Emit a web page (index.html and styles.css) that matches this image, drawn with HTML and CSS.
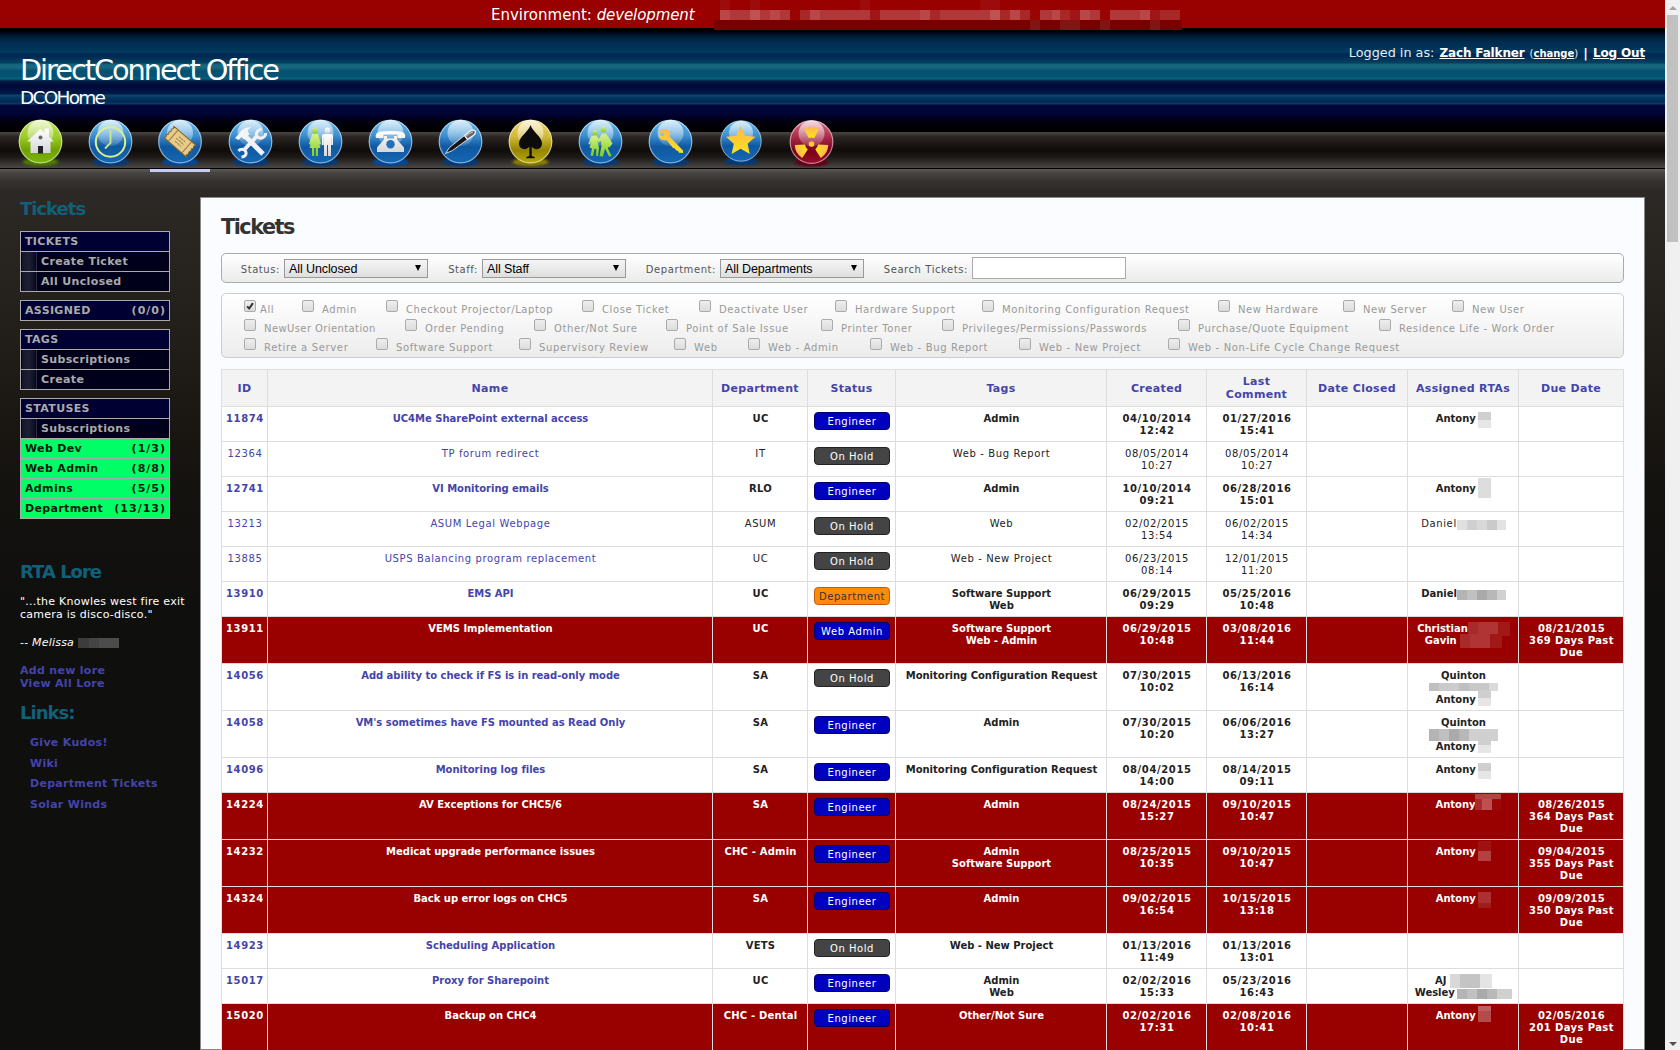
FILE: index.html
```html
<!DOCTYPE html>
<html lang="en">
<head>
<meta charset="utf-8">
<title>DirectConnect Office - Tickets</title>
<link rel="stylesheet" href="styles.css">
</head>
<body>
<div class="page">
  <div class="env">
    <span>Environment:</span> <em>development</em>
    <svg class="env-mask" width="468" height="31" viewBox="714 0 468 31" shape-rendering="crispEdges" fill="none">
      <path d="M714 25h468" stroke="#7a0000" stroke-width="10"/>
      <path d="M720 5h10M750 5h10M860 5h10M980 5h20" stroke="#9d0c0c" stroke-width="10"/>
      <path d="M720 15h460" stroke="#b13838" stroke-width="10"/>
      <path d="M720 15h10M770 15h10M810 15h10M920 15h10M1010 15h10M1052 15h8M1080 15h10M1140 15h10" stroke="#b94747" stroke-width="10"/>
      <path d="M750 15h10M990 15h10" stroke="#c05252" stroke-width="10"/>
      <path d="M800 15h10M930 15h10M1000 15h10M1020 15h10M1060 15h10M1160 15h20" stroke="#a82828" stroke-width="10"/>
      <path d="M870 15h10M1070 15h10M1150 15h10" stroke="#a01616" stroke-width="10"/>
      <path d="M790 15h10M1030 15h10M1100 15h10" stroke="#990404" stroke-width="10"/>
      <path d="M1030 25h10M1060 25h20M1100 25h10M1150 25h10" stroke="#821414" stroke-width="10"/>
    </svg>
  </div>
  <header class="header">
    <div class="brand">
      <h1>DirectConnect Office</h1>
      <p>DCOHome</p>
    </div>
    <div class="login"><span>Logged in as:</span> <a class="user">Zach Falkner</a> <small>(<a>change</a>)</small> <b>|</b> <a class="out">Log Out</a></div>
  </header>

  <svg class="defs" width="0" height="0">
    <defs>
      <linearGradient id="blue" x1="0" y1="0" x2="0" y2="1"><stop offset="0" stop-color="#6bbcec"/><stop offset=".35" stop-color="#3f92d2"/><stop offset=".62" stop-color="#0f58a0"/><stop offset="1" stop-color="#1568b4"/></linearGradient>
      <linearGradient id="green" x1="0" y1="0" x2="0" y2="1"><stop offset="0" stop-color="#c2e45a"/><stop offset=".4" stop-color="#9ccc28"/><stop offset=".7" stop-color="#6ea000"/><stop offset="1" stop-color="#7cb80a"/></linearGradient>
      <linearGradient id="gold" x1="0" y1="0" x2="0" y2="1"><stop offset="0" stop-color="#f0d870"/><stop offset=".4" stop-color="#d0b838"/><stop offset=".7" stop-color="#948400"/><stop offset="1" stop-color="#b8ac10"/></linearGradient>
      <linearGradient id="red" x1="0" y1="0" x2="0" y2="1"><stop offset="0" stop-color="#d87088"/><stop offset=".4" stop-color="#a82848"/><stop offset=".7" stop-color="#780018"/><stop offset="1" stop-color="#98102c"/></linearGradient>
      <linearGradient id="shine" x1="0" y1="0" x2="0" y2="1"><stop offset="0" stop-color="#fff" stop-opacity=".75"/><stop offset="1" stop-color="#fff" stop-opacity=".12"/></linearGradient>
      <linearGradient id="silver" x1="0" y1="0" x2="0" y2="1"><stop offset="0" stop-color="#fff"/><stop offset="1" stop-color="#d4d6da"/></linearGradient>
      <linearGradient id="lime" x1="0" y1="0" x2="0" y2="1"><stop offset="0" stop-color="#d8f090"/><stop offset="1" stop-color="#7cd010"/></linearGradient>
      <linearGradient id="amber" x1="0" y1="0" x2="0" y2="1"><stop offset="0" stop-color="#ffb84c"/><stop offset="1" stop-color="#ffe21c"/></linearGradient>
      <filter id="soft" x="-30%" y="-100%" width="160%" height="300%"><feGaussianBlur stdDeviation="1.8 1.2"/></filter>
      <g id="gloss"><circle cx="30.500" cy="23.500" r="21.300" fill="none" stroke="#fff" stroke-opacity=".5" stroke-width="1.200"/><circle cx="30.500" cy="15" r="13" fill="url(#shine)"/></g>
    </defs>
  </svg>

  <nav class="nav">
    <ul>
      <li><svg viewBox="0 0 60 51"><ellipse cx="30.500" cy="44" rx="18" ry="4" fill="#4c7a00" filter="url(#soft)"/><circle cx="30.500" cy="23.500" r="21.800" fill="url(#green)"/><use href="#gloss"/><path d="M17 23.500 30.500 11l4 3.700V10.500H39v8.200l5 4.800h-3.500V35h-20V23.500z" fill="url(#silver)"/><circle cx="30.500" cy="19.500" r="2" fill="#666"/><path d="M28 28h5v7.500h-5z" fill="#222"/></svg></li>
      <li><svg viewBox="0 0 60 51"><ellipse cx="30.500" cy="44" rx="18" ry="4" fill="#063a7c" filter="url(#soft)"/><circle cx="30.500" cy="23.500" r="21.800" fill="url(#blue)"/><use href="#gloss"/><circle cx="30.500" cy="24" r="14.700" fill="none" stroke="#dcf08a" stroke-width="2"/><path d="M30.500 12.500V25L25 30.500" fill="none" stroke="#cfe888" stroke-width="1.800"/></svg></li>
      <li class="on"><svg viewBox="0 0 60 51"><ellipse cx="30.500" cy="44" rx="18" ry="4" fill="#064a9c" filter="url(#soft)"/><circle cx="30" cy="23.500" r="21.800" fill="url(#blue)"/><use href="#gloss" x="-.5"/><g transform="rotate(41 30 23.500)"><path d="M15.500 16h29l-1 2 1 1.900-1 1.800 1 1.900-1 1.800 1 1.900-1 1.800 1 1.900h-29l1-1.900-1-1.800 1-1.900-1-1.800 1-1.900-1-1.800 1-1.900z" fill="#e6cc8c" stroke="#8a6420" stroke-width="1"/><path d="M21 16.500v14M39 16.500v14" stroke="#a07830" stroke-width="1"/><path d="M26 20.500h8M25 23.500h10M26 26.500h8" stroke="#a8884c" stroke-width="1.200" stroke-dasharray="2.500 .7"/></g></svg></li>
      <li><svg viewBox="0 0 60 51"><ellipse cx="30.500" cy="44" rx="18" ry="4" fill="#063a7c" filter="url(#soft)"/><circle cx="30.500" cy="23.500" r="21.800" fill="url(#blue)"/><use href="#gloss"/><g stroke="#f0f2f6" fill="none"><path d="M25 18 43 36" stroke-width="5"/><path d="M37 18 24 32" stroke-width="4"/><path d="M41.500 11.500c-3 0-5.500 2.300-5 5.500.400 2.500 4 4 6.500 2.500 1.800-1 2.800-2.500 2.500-4.500M18.500 33c2-2.500 6-2.200 7.200.5 1.300 3.200-1.200 5.500-4.200 5.500" stroke-width="3"/></g><path d="m15 20 4-4c1-4 7-7.500 12.500-6.500-3 1-4 2.500-3.500 4.500l1.500 2-5.500 5.500-2.500-2.500-3 3z" fill="#f4f5f8"/></svg></li>
      <li><svg viewBox="0 0 60 51"><ellipse cx="30.500" cy="44" rx="18" ry="4" fill="#063a7c" filter="url(#soft)"/><circle cx="30.500" cy="23.500" r="21.800" fill="url(#blue)"/><use href="#gloss"/><g fill="url(#lime)"><circle cx="25" cy="12.500" r="2.900"/><path d="M22 16h6l3 10-1.500.7L28 22l2.500 8H28v8h-2.200v-8h-1.600v8H22v-8h-2.500L22 22l-1.500 4.700L19 26z"/></g><g fill="url(#silver)"><circle cx="37.500" cy="12.500" r="2.900"/><path d="M34 16h7q2 0 2 2v9h-1.800v-8H41v19h-3v-11h-1v11h-3V19h-.2v8H32v-9q0-2 2-2z"/></g></svg></li>
      <li><svg viewBox="0 0 60 51"><ellipse cx="30.500" cy="44" rx="18" ry="4" fill="#064a9c" filter="url(#soft)"/><circle cx="30.500" cy="23.500" r="21.800" fill="url(#blue)"/><use href="#gloss"/><path d="M16 20c-1-4 1-6 5-6.500 6-.8 13-.8 19 0 4 .5 6 2.500 5 6.500h-7.500v-3.500h-14V20zM24 18h3v2.500h7V18h3v3.500l7 8V34H17v-4.500l7-8z" fill="url(#silver)"/><circle cx="30.500" cy="26.300" r="4.200" fill="#2270b8"/></svg></li>
      <li><svg viewBox="0 0 60 51"><ellipse cx="30.500" cy="44" rx="18" ry="4" fill="#063a7c" filter="url(#soft)"/><circle cx="30.500" cy="23.500" r="21.800" fill="url(#blue)"/><use href="#gloss"/><path d="m15.500 35.500 4-6L34.500 17.500l3 4L22.500 32.500z" fill="#161616" stroke="#e8ecf2" stroke-width=".9"/><path d="m34.500 17.500 5.500-4.300q4-2.200 5.300-.2 1 2.400-2 4.500l-5.800 4z" fill="#666" stroke="#f4f6fa" stroke-width="1.200"/><path d="M36 18q4-3.300 7-4" stroke="#ccc" fill="none"/></svg></li>
      <li><svg viewBox="0 0 60 51"><ellipse cx="30.500" cy="44" rx="18" ry="4" fill="#8a7e00" filter="url(#soft)"/><circle cx="30.500" cy="23.500" r="21.800" fill="url(#gold)"/><use href="#gloss"/><path d="M30.500 7C33 14.500 42 18.500 42 25.500c0 6-7 7.500-10.300 3.200V38l3 1v1.300h-8.400V39l3-1v-9.300C26 33 19 31.500 19 25.500 19 18.500 28 14.500 30.500 7z" fill="#0c0c0a"/></svg></li>
      <li><svg viewBox="0 0 60 51"><ellipse cx="30.500" cy="44" rx="18" ry="4" fill="#063a7c" filter="url(#soft)"/><circle cx="30.500" cy="23.500" r="21.800" fill="url(#blue)"/><use href="#gloss"/><g fill="url(#lime)"><circle cx="25" cy="14.500" r="2.600"/><path d="m21.500 18 5-.5 2.500 3.500 3 1-.5 1.500-4-1 1.500 7.500-1 8h-2l.3-7-1.800-.3L23 38l-2.500-.5 1.500-7-2.500-1 2-6-1.500 3-1.700-.5z"/><circle cx="33.500" cy="11.500" r="2.900"/><path d="m32 15.500 4 .2 3 4 3.500 5.800-3 4-1-1-.5 2 3.500 7.500-2.500.5-4-8-2 8-3.500-.2 2-10-.5-6-2.500 2.500-1-1.500z"/></g></svg></li>
      <li><svg viewBox="0 0 60 51"><ellipse cx="30.500" cy="44" rx="18" ry="4" fill="#063a7c" filter="url(#soft)"/><circle cx="30.500" cy="23.500" r="21.800" fill="url(#blue)"/><use href="#gloss"/><path fill-rule="evenodd" d="M20 13q4-3.500 8-1 2.800 2.500 1.500 6.500L43 32.500V35l-4-.3-1-2-2-.2-1-2-2-.5-6.500-8q-4 1-6.500-1.500-2.500-4 0-7.500zm2.200 1.200a1.900 1.900 0 1 0 .1 0z" fill="url(#amber)"/></svg></li>
      <li><svg viewBox="0 0 60 51"><ellipse cx="31" cy="43.500" rx="17" ry="3.500" fill="#063a7c" filter="url(#soft)"/><circle cx="31" cy="23" r="20.500" fill="url(#blue)"/><circle cx="31" cy="23" r="20.200" fill="none" stroke="#fff" stroke-opacity=".5" stroke-width="1"/><circle cx="31" cy="15" r="12" fill="url(#shine)"/><path d="m30.700 8 4.300 9.700 10.400 1.100-7.800 7 2.200 10.300-9.100-5.300-9.100 5.300 2.200-10.300-7.800-7 10.400-1.100z" fill="url(#amber)"/></svg></li>
      <li><svg viewBox="0 0 60 51"><ellipse cx="31.500" cy="44.500" rx="17" ry="4" fill="#600012" filter="url(#soft)"/><circle cx="31.500" cy="24" r="21.800" fill="url(#red)"/><use href="#gloss" x="1" y=".5"/><g fill="url(#amber)"><circle cx="31.500" cy="26" r="2.800"/><path d="m28.700 20-4.700-9q7.500-4 15 0l-4.700 9q-2.800-1-5.600 0z"/><path d="m28.700 20-4.700-9q7.500-4 15 0l-4.700 9q-2.800-1-5.600 0z" transform="rotate(120 31.500 26)"/><path d="m28.700 20-4.700-9q7.500-4 15 0l-4.700 9q-2.800-1-5.600 0z" transform="rotate(240 31.500 26)"/></g></svg></li>
    </ul>
  </nav>

  <div class="body">
    <aside class="side">
      <h2>Tickets</h2>
      <ul class="menu"><li>TICKETS</li><li class="sub">Create Ticket</li><li class="sub">All Unclosed</li></ul>
      <ul class="menu"><li>ASSIGNED <b>(0/0)</b></li></ul>
      <ul class="menu"><li>TAGS</li><li class="sub">Subscriptions</li><li class="sub">Create</li></ul>
      <ul class="menu"><li>STATUSES</li><li class="sub">Subscriptions</li><li class="go">Web Dev <b>(1/3)</b></li><li class="go">Web Admin <b>(8/8)</b></li><li class="go">Admins <b>(5/5)</b></li><li class="go">Department <b>(13/13)</b></li></ul>
      <h2 class="lore">RTA Lore</h2>
      <p>"...the Knowles west fire exit camera is disco-disco."</p>
      <p class="by">-- <em>Melissa</em> <span class="px-side"></span></p>
      <p class="more"><a>Add new lore</a><a>View All Lore</a></p>
      <h2 class="links-title">Links:</h2>
      <ul class="links"><li>Give Kudos!</li><li>Wiki</li><li>Department Tickets</li><li>Solar Winds</li></ul>
    </aside>

    <main class="main">
      <h2>Tickets</h2>
      <form class="filters">
        <label>Status:</label><span class="select">All Unclosed</span>
        <label>Staff:</label><span class="select">All Staff</span>
        <label>Department:</label><span class="select">All Departments</span>
        <label>Search Tickets:</label><span class="search"></span>
      </form>
      <div class="tags">
        <div class="tag-row one"><label class="all"><i><svg viewBox="0 0 12 12"><path d="M2.500 6.500 5 9l4.500-6.500" fill="none" stroke="#333" stroke-width="2.400"/></svg></i>All</label><label><i></i>Admin</label><label><i></i>Checkout Projector/Laptop</label><label><i></i>Close Ticket</label><label><i></i>Deactivate User</label><label><i></i>Hardware Support</label><label><i></i>Monitoring Configuration Request</label><label><i></i>New Hardware</label><label><i></i>New Server</label><label><i></i>New User</label></div>
        <div class="tag-row two"><label><i></i>NewUser Orientation</label><label><i></i>Order Pending</label><label><i></i>Other/Not Sure</label><label><i></i>Point of Sale Issue</label><label><i></i>Printer Toner</label><label><i></i>Privileges/Permissions/Passwords</label><label><i></i>Purchase/Quote Equipment</label><label><i></i>Residence Life - Work Order</label></div>
        <div class="tag-row three"><label><i></i>Retire a Server</label><label><i></i>Software Support</label><label><i></i>Supervisory Review</label><label><i></i>Web</label><label><i></i>Web - Admin</label><label><i></i>Web - Bug Report</label><label><i></i>Web - New Project</label><label><i></i>Web - Non-Life Cycle Change Request</label></div>
      </div>
      <table class="tickets">
        <colgroup><col class="c-id"><col class="c-name"><col class="c-dept"><col class="c-status"><col class="c-tags"><col class="c-date"><col class="c-date"><col class="c-closed"><col class="c-rta"><col class="c-due"></colgroup>
        <thead><tr><th>ID</th><th>Name</th><th>Department</th><th>Status</th><th>Tags</th><th>Created</th><th>Last<br>Comment</th><th>Date Closed</th><th>Assigned RTAs</th><th>Due Date</th></tr></thead>
        <tbody>
          <tr class="new"><td>11874</td><td>UC4Me SharePoint external access</td><td>UC</td><td><span class="badge">Engineer</span></td><td>Admin</td><td>04/10/2014<br>12:42</td><td>01/27/2016<br>15:41</td><td></td><td>Antony <span class="px"></span></td><td></td></tr>
          <tr><td>12364</td><td>TP forum redirect</td><td>IT</td><td><span class="badge hold">On Hold</span></td><td>Web - Bug Report</td><td>08/05/2014<br>10:27</td><td>08/05/2014<br>10:27</td><td></td><td></td><td></td></tr>
          <tr class="new"><td>12741</td><td>VI Monitoring emails</td><td>RLO</td><td><span class="badge">Engineer</span></td><td>Admin</td><td>10/10/2014<br>09:21</td><td>06/28/2016<br>15:01</td><td></td><td>Antony <span class="px px-tall"></span></td><td></td></tr>
          <tr><td>13213</td><td>ASUM Legal Webpage</td><td>ASUM</td><td><span class="badge hold">On Hold</span></td><td>Web</td><td>02/02/2015<br>13:54</td><td>06/02/2015<br>14:34</td><td></td><td>Daniel<span class="px px-l"></span></td><td></td></tr>
          <tr><td>13885</td><td>USPS Balancing program replacement</td><td>UC</td><td><span class="badge hold">On Hold</span></td><td>Web - New Project</td><td>06/23/2015<br>08:14</td><td>12/01/2015<br>11:20</td><td></td><td></td><td></td></tr>
          <tr class="new"><td>13910</td><td>EMS API</td><td>UC</td><td><span class="badge dept">Department</span></td><td>Software Support<br>Web</td><td>06/29/2015<br>09:29</td><td>05/25/2016<br>10:48</td><td></td><td>Daniel<span class="px px-l dark"></span></td><td></td></tr>
          <tr class="new late"><td>13911</td><td>VEMS Implementation</td><td>UC</td><td><span class="badge">Web Admin</span></td><td>Software Support<br>Web - Admin</td><td>06/29/2015<br>10:48</td><td>03/08/2016<br>11:44</td><td></td><td>Christian<span class="px px-m"></span><br>Gavin <span class="px px-m"></span></td><td>08/21/2015<br>369 Days Past<br>Due</td></tr>
          <tr class="new"><td>14056</td><td>Add ability to check if FS is in read-only mode</td><td>SA</td><td><span class="badge hold">On Hold</span></td><td>Monitoring Configuration Request</td><td>07/30/2015<br>10:02</td><td>06/13/2016<br>16:14</td><td></td><td>Quinton<br><span class="px px-xl"></span><br>Antony <span class="px px-up"></span></td><td></td></tr>
          <tr class="new"><td>14058</td><td>VM's sometimes have FS mounted as Read Only</td><td>SA</td><td><span class="badge">Engineer</span></td><td>Admin</td><td>07/30/2015<br>10:20</td><td>06/06/2016<br>13:27</td><td></td><td>Quinton<br><span class="px px-xl dark"></span><br>Antony <span class="px px-up"></span></td><td></td></tr>
          <tr class="new"><td>14096</td><td>Monitoring log files</td><td>SA</td><td><span class="badge">Engineer</span></td><td>Monitoring Configuration Request</td><td>08/04/2015<br>14:00</td><td>08/14/2015<br>09:11</td><td></td><td>Antony <span class="px"></span></td><td></td></tr>
          <tr class="new late"><td>14224</td><td>AV Exceptions for CHC5/6</td><td>SA</td><td><span class="badge">Engineer</span></td><td>Admin</td><td>08/24/2015<br>15:27</td><td>09/10/2015<br>10:47</td><td></td><td>Antony<span class="px px-wide"></span></td><td>08/26/2015<br>364 Days Past<br>Due</td></tr>
          <tr class="new late"><td>14232</td><td>Medicat upgrade performance issues</td><td>CHC - Admin</td><td><span class="badge">Engineer</span></td><td>Admin<br>Software Support</td><td>08/25/2015<br>10:35</td><td>09/10/2015<br>10:47</td><td></td><td>Antony <span class="px px-tall"></span></td><td>09/04/2015<br>355 Days Past<br>Due</td></tr>
          <tr class="new late"><td>14324</td><td>Back up error logs on CHC5</td><td>SA</td><td><span class="badge">Engineer</span></td><td>Admin</td><td>09/02/2015<br>16:54</td><td>10/15/2015<br>13:18</td><td></td><td>Antony <span class="px px-dim"></span></td><td>09/09/2015<br>350 Days Past<br>Due</td></tr>
          <tr class="new"><td>14923</td><td>Scheduling Application</td><td>VETS</td><td><span class="badge hold">On Hold</span></td><td>Web - New Project</td><td>01/13/2016<br>11:49</td><td>01/13/2016<br>13:01</td><td></td><td></td><td></td></tr>
          <tr class="new"><td>15017</td><td>Proxy for Sharepoint</td><td>UC</td><td><span class="badge">Engineer</span></td><td>Admin<br>Web</td><td>02/02/2016<br>15:33</td><td>05/23/2016<br>16:43</td><td></td><td>AJ <span class="px px-m"></span><br>Wesley <span class="px px-l px-w dark"></span></td><td></td></tr>
          <tr class="new late"><td>15020</td><td>Backup on CHC4</td><td>CHC - Dental</td><td><span class="badge">Engineer</span></td><td>Other/Not Sure</td><td>02/02/2016<br>17:31</td><td>02/08/2016<br>10:41</td><td></td><td>Antony <span class="px px-up px-bright"></span></td><td>02/05/2016<br>201 Days Past<br>Due</td></tr>
        </tbody>
      </table>
    </main>
  </div>
</div>
<div class="scroll"><i class="up"></i><b></b><i class="down"></i></div>
</body>
</html>
```
FILE: styles.css
```css
* { box-sizing: border-box; margin: 0; padding: 0; }
body {
  display: grid;
  grid-template-columns: 1fr 15px;
  height: 1050px;
  overflow: hidden;
  font: 11px/13px "DejaVu Sans", Verdana, sans-serif;
}
ul { list-style: none; }
.page { height: 1050px; overflow: hidden; background: #0f0f0e; }
.defs { display: block; }

.env {
  position: relative;
  z-index: 1;
  height: 28px;
  padding-left: 491px;
  background: #900;
  color: #fff;
  font-size: 15px;
  line-height: 30px;
}
.env em { letter-spacing: -.1px; }
.env-mask { position: absolute; left: 714px; top: 0; }

.header {
  display: flex;
  justify-content: space-between;
  height: 104px;
  padding: 17px 20px 0;
  color: #fff;
  background: linear-gradient(#000 0, #000 3px, #000a1c 5px, #001a33 8px, #012c50 14px, #013a60 25px, #002a55 25px, #002a55 29px, #013658 31px, #04405f 35px, #12617b 36px, #1a6a80 39px, #055070 43px, #045474 49px, #066482 50px, #04486a 52px, #001a40 53px, #000838 58px, #001040 62px, #001a48 66px, #0c4870 67px, #04345f 70px, #012a55 74px, #0a3f66 76px, #00063a 77px, #000535 84px, #00002c 89px, #000010 92px, #00000e 97px, #000 98px);
}
.brand h1 { font-size: 28.8px; line-height: 50px; font-weight: 400; letter-spacing: -2.05px; }
.brand p { margin-top: -8px; font-size: 18.5px; line-height: 22px; letter-spacing: -1.75px; }
.login { display: flex; align-items: baseline; gap: 5px; height: 16px; font-size: 12.800px; line-height: 16px; white-space: nowrap; color: #e6ecf2; }
.login a { font-weight: 700; text-decoration: underline; color: #fff; }
.login .user, .login .out { font-size: 12px; letter-spacing: -.15px; }
.login small { font-size: 10px; }
.login b { color: #fff; }

.nav {
  height: 37px;
  border-bottom: 1px solid #000;
  background: linear-gradient(#4b4745 0, #2a2523 5px, #0f0b08 18px, #1c1815 25px, #4b4745 36px);
}
.nav ul { position: relative; top: -14px; display: flex; gap: 10px; margin-bottom: -14px; padding-left: 10px; }
.nav li { width: 60px; height: 54px; }
.nav li.on { border-bottom: 3px solid #c8ccf4; }
.nav svg { display: block; width: 60px; height: 51px; }

.body {
  display: flex;
  height: 881px;
  background: linear-gradient(#5c5956 0, #4a4744 3px, #353230 12px, #2c2926 22px, #28241f 90px, #1e1a15 210px, #14120f 320px, #0f0f0e 440px);
}
.side { width: 200px; padding: 31px 0 0 20px; color: #fff; }
.side h2 { font-size: 18px; line-height: 18px; letter-spacing: -1px; color: #11607a; }
.menu {
  width: 150px;
  margin-bottom: 8px;
  border: 1px solid #aaa;
  background: #003;
  color: #aaa;
  font-weight: 700;
  letter-spacing: .35px;
}
.side h2 + .menu { margin-top: 13px; }
.menu li { display: flex; justify-content: space-between; height: 20px; padding: 1px 4px 0; line-height: 18px; border-bottom: 1px solid #aaa; }
.menu li:last-child { height: 19px; border-bottom: 0; }
.menu b { letter-spacing: 1px; margin-right: -1px; }
.menu .sub {
  padding-left: 20px;
  background: linear-gradient(90deg, #00001a 0 1px, #14142c 1px, #1e1e34 8px, #0c0c24 14px, #00001a 15px, #2c2c3c 15px 16px, #00001a 16px);
}
.menu .go { background: #0f6; color: #001a0a; }
.side .lore { margin: 44px 0 14px; }
.side p { letter-spacing: .25px; padding-right: 10px; }
.side p.by { height: 13px; margin-top: 15px; letter-spacing: .2px; white-space: nowrap; }
.more { margin-top: 15px; }
.more a { display: block; }
.more a, .links { color: #44a; font-weight: 700; letter-spacing: .3px; }
.side .links-title { margin: 14px 0 11px; }
.links { padding-left: 10px; line-height: 20.700px; }

.main {
  width: 1445px;
  height: 853px;
  margin-top: 28px;
  padding: 16px 20px 0;
  border: 1px solid #888;
  background: #fbfcff;
  color: #222;
}
.main h2 { font-size: 20.800px; line-height: 26px; letter-spacing: -1.500px; color: #333; }
.filters {
  display: flex;
  align-items: center;
  height: 30px;
  margin-top: 13px;
  border: 1px solid #aaa;
  border-radius: 5px;
  background: linear-gradient(#fff, #ebebeb);
  font-size: 10px;
  letter-spacing: .57px;
  color: #555;
}
.filters label { flex: none; width: 62px; text-align: right; padding: 2px 4px 0 0; }
.filters label:nth-of-type(2) { width: 54px; }
.filters label:nth-of-type(3) { width: 94px; }
.filters label:nth-of-type(4) { width: 108px; }
.select {
  position: relative;
  width: 144px;
  height: 19px;
  padding-left: 4px;
  border: 1px solid #999;
  background: linear-gradient(#f6f6f6, #dedede);
  font: 12.500px/18px "Liberation Sans", Arial, sans-serif;
  letter-spacing: -.1px;
  color: #000;
}
.select::after { content: ""; position: absolute; right: 6px; top: 5px; border: 3px solid transparent; border-top: 6px solid #000; border-bottom: 0; }
.search { width: 154px; height: 22px; border: 1px solid #aaa; background: #fff; }
.tags {
  height: 65px;
  margin: 10px 0 11px;
  padding: 3px 0 0 22px;
  border: 1px solid #ccc;
  border-radius: 5px;
  background: linear-gradient(#fff, #ececec);
  font-size: 10px;
  letter-spacing: .6px;
  color: #999;
}
.tag-row { display: grid; height: 19px; line-height: 26px; white-space: nowrap; }
.one { grid-template-columns: 58px 84px 196px 117px 136px 147px 236px 125px 109px auto; }
.two { grid-template-columns: 161px 129px 132px 155px 121px 236px 201px auto; }
.three { grid-template-columns: 132px 143px 155px 74px 122px 149px 149px auto; letter-spacing: .65px; }
.tag-row label { display: flex; gap: 8px; }
.tag-row .all { gap: 4px; }
.two label:first-child { letter-spacing: .4px; }
.tag-row i { width: 12px; height: 12px; margin-top: 3px; border: 1px solid #aaa; border-radius: 2px; background: linear-gradient(#eee, #dcdcdc); }
.tag-row svg { display: block; width: 10px; height: 10px; }

.tickets { width: 1403px; table-layout: fixed; border-collapse: collapse; background: #fff; text-align: center; font-size: 10px; line-height: 12px; letter-spacing: .62px; }
.c-id { width: 46px; }
.c-name { width: 445px; }
.c-dept { width: 95px; }
.c-status { width: 88px; }
.c-tags { width: 211px; }
.c-date { width: 100px; }
.c-closed { width: 101px; }
.c-rta { width: 111px; }
.tickets th, .tickets td { border: 1px solid #ddd; white-space: nowrap; }
.tickets th { height: 37px; background: #f3f3f3; color: #44a; font-size: 11px; line-height: 13px; letter-spacing: .32px; }
.tickets td { height: 35px; padding: 6px 0 4px 1px; vertical-align: top; }
.tickets td:nth-child(-n+2) { color: #44a; }
.new td { font-weight: 700; }
.new td:nth-child(2), .new td:nth-child(5), .new td:nth-child(9) { letter-spacing: -.02px; }
.new td:nth-child(3) { letter-spacing: .2px; }
.new td:nth-child(10) { letter-spacing: .4px; }
.tickets .late td, .tickets .late td:nth-child(-n+2) { background: #900; color: #fff; }
.badge {
  display: block;
  width: 76px;
  height: 18px;
  margin: -1px auto 0;
  border: 1px solid #006;
  border-radius: 4px;
  background: #0000bf;
  color: #fff;
  font-weight: 400;
  line-height: 18px;
  letter-spacing: .55px;
}
.badge.hold { background: #444; border-color: #222; }
.badge.dept { background: #ff8a0a; border-color: #c65a10; color: #333; }

/* Surname masks. Margins keep each one exactly one text line high. */
.px { display: inline-block; width: 13px; height: 16px; margin: -1px 0 -3px -1px; vertical-align: top; background: linear-gradient(#cfcfcf 50%, #e6e6e6 50%); }
.px-tall { height: 20px; margin: -5px 0 -3px -1px; background: #ddd; }
.px-up { height: 16px; margin: -4px 0 0 -1px; }
.px-m { width: 42px; height: 14px; margin: -1px 0; background: linear-gradient(90deg, #d8d8d8 0 10px, #c4c4c4 10px 30px, #e4e4e4 30px); }
.px-l { width: 49px; height: 10px; margin: 2px 0 0; background: linear-gradient(90deg, #e0e0e0 0 10px, #d0d0d0 10px 20px, #d9d9d9 20px 30px, #cacaca 30px 40px, #e2e2e2 40px); }
.px-w { width: 55px; margin-left: -1px; }
.px-xl { width: 69px; height: 8px; margin: 1px 0 0; background: linear-gradient(90deg, #c0c0c0 0 10px, #cacaca 10px 20px, #ccc 20px 30px, #bfbfbf 30px 40px, #c8c8c8 40px 60px, #dadada 60px); }
.dark { background: linear-gradient(90deg, #b4b4b4 0 10px, #c0c0c0 10px 20px, #aaa 20px 30px, #b8b8b8 30px 40px, #d0d0d0 40px); }
.px-xl.dark { height: 12px; margin: 0; }
.late .px { background: linear-gradient(#a01212 50%, #b44040 50%); }
.late .px-wide { width: 26px; height: 16px; margin: -5px -9px 1px -1px; background: linear-gradient(90deg, #a82c2c 0 7px, #bf5050 7px 17px, #9c0808 17px) 0 100% / 100% 11px no-repeat, #b44444; }
.late .px-dim { background: linear-gradient(#ad3030 66%, #a01c1c 66%); }
.late .px-bright { background: linear-gradient(#be5e5e 33%, #b44a4a 33%); }
.late .px-m { background: linear-gradient(90deg, #a82a2a 0 10px, #b03434 10px 30px, #a01818 30px); }
.px-side { display: inline-block; width: 41px; height: 10px; margin-top: 2px; vertical-align: top; background: linear-gradient(90deg, #3c3c3c 0 11px, #444 11px 21px, #4c4c4c 21px); }

.scroll { display: flex; flex-direction: column; align-items: center; background: #f0f0f0; }
.scroll b { width: 11px; height: 227px; background: #c1c1c1; }
.scroll i { border: 4px solid transparent; }
.scroll .up { margin: 2px 0 5px; border-bottom-color: #a3a3a3; }
.scroll .down { margin-top: auto; border-top-color: #505050; }
```
